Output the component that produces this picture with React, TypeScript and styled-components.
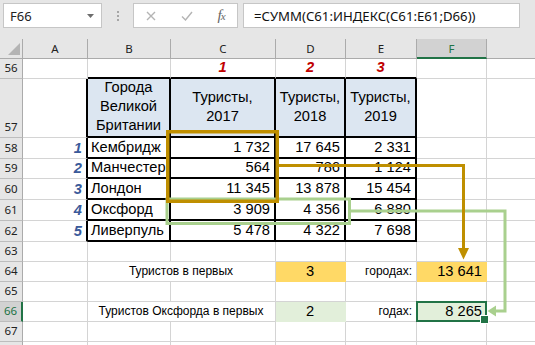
import React from 'react';
import styled, { createGlobalStyle } from 'styled-components';

const GlobalStyle = createGlobalStyle`
  html, body {
    margin: 0;
    padding: 0;
  }
  body {
    background: #ffffff;
    overflow: hidden;
  }
  * {
    box-sizing: border-box;
  }
`;

const GRID = '#d4d4d4';
const HEAD_LINE = '#ababab';
const HEAD_BG = '#e6e6e6';
const HEAD_ACTIVE = '#d2d2d2';
const EXCEL_GREEN = '#217346';
const YELLOW = '#ffd966';
const MINT = '#e2efda';
const TABLE_HEAD = '#dce6f1';

const Window = styled.div`
  position: relative;
  width: 535px;
  height: 345px;
  overflow: hidden;
  background: #fff;
`;

/* ---------- formula bar ---------- */

const TopBar = styled.div`
  display: flex;
  align-items: flex-start;
  height: 39px;
  padding: 3px 0 0 3px;
  background: ${HEAD_BG};
  font-family: 'Noto Sans', sans-serif;
`;

const NameBox = styled.div`
  display: flex;
  align-items: center;
  justify-content: space-between;
  width: 99px;
  height: 25px;
  padding: 0 7px 0 6px;
  background: #fff;
  border: 1px solid #c6c6c6;
  font-size: 13px;
  color: #222;
`;

const Grip = styled.div`
  display: flex;
  flex-direction: column;
  align-items: center;
  justify-content: center;
  gap: 2px;
  width: 31px;
  height: 25px;

  span {
    width: 2px;
    height: 2px;
    background: #a6a6a6;
  }
`;

const ButtonGroup = styled.div`
  display: flex;
  align-items: center;
  justify-content: space-around;
  width: 105px;
  height: 25px;
  background: #fff;
  border: 1px solid #c6c6c6;
`;

const Fx = styled.span`
  font-family: 'Liberation Serif', serif;
  font-style: italic;
  font-size: 15px;
  color: #666;
  letter-spacing: -1px;

  small {
    font-size: 11px;
  }
`;

const FormulaBox = styled.div`
  display: flex;
  align-items: center;
  width: 277px;
  height: 25px;
  margin-left: 5px;
  padding-left: 10px;
  background: #fff;
  border: 1px solid #c6c6c6;
  font-size: 13.2px;
  color: #111;
  white-space: nowrap;
`;

/* ---------- sheet ---------- */

const Sheet = styled.div`
  display: grid;
  grid-template-columns: 23px 65px 83px 105px 70px 71px 70px 200px;
  grid-template-rows: 20px 20px 59px 21px 20px 21px 21px 21px 20px 20px 20px 20px 20px 20px;
  font-family: 'Liberation Sans', Arial, sans-serif;
  font-size: 14.67px;
  color: #000;
`;

const Corner = styled.div`
  position: relative;
  background: ${HEAD_BG};
  border-right: 1px solid ${HEAD_LINE};
  border-bottom: 1px solid ${HEAD_LINE};

  &::after {
    content: '';
    position: absolute;
    right: 2px;
    bottom: 3px;
    border-style: solid;
    border-width: 0 0 12px 12px;
    border-color: transparent transparent #b4b4b4 transparent;
  }
`;

const ColHead = styled.div<{ $active?: boolean }>`
  display: flex;
  align-items: center;
  justify-content: center;
  background: ${(p) => (p.$active ? HEAD_ACTIVE : HEAD_BG)};
  border-right: 1px solid ${HEAD_LINE};
  border-bottom: ${(p) => (p.$active ? `2px solid ${EXCEL_GREEN}` : `1px solid ${HEAD_LINE}`)};
  font-family: 'Noto Sans', sans-serif;
  font-size: 11.5px;
  color: ${(p) => (p.$active ? EXCEL_GREEN : '#222')};
`;

const RowHead = styled.div<{ $active?: boolean }>`
  display: flex;
  align-items: flex-end;
  justify-content: center;
  padding-bottom: 1px;
  line-height: 18px;
  background: ${(p) => (p.$active ? HEAD_ACTIVE : HEAD_BG)};
  border-right: ${(p) => (p.$active ? `2px solid ${EXCEL_GREEN}` : `1px solid ${HEAD_LINE}`)};
  border-bottom: 1px solid #bdbdbd;
  font-family: 'Noto Sans', sans-serif;
  font-size: 11.5px;
  color: ${(p) => (p.$active ? EXCEL_GREEN : '#222')};
`;

type Align = 'left' | 'center' | 'right';

const justify = { left: 'flex-start', center: 'center', right: 'flex-end' };

const Cell = styled.div<{
  $align?: Align;
  $fill?: string;
  $rb?: boolean;
  $bb?: boolean;
  $span?: number;
  $selected?: boolean;
}>`
  display: flex;
  align-items: flex-end;
  justify-content: ${(p) => justify[p.$align || 'left']};
  grid-column: span ${(p) => p.$span || 1};
  padding: 0 4px 1px 3px;
  line-height: 18px;
  white-space: nowrap;
  background: ${(p) => p.$fill || '#fff'};
  border-right: ${(p) => (p.$rb ? '2px solid #000' : `1px solid ${p.$fill || GRID}`)};
  border-bottom: ${(p) => (p.$bb ? '2px solid #000' : `1px solid ${p.$fill || GRID}`)};
  position: ${(p) => (p.$selected ? 'relative' : 'static')};

  ${(p) =>
    p.$selected &&
    `
    &::after {
      content: '';
      position: absolute;
      top: -1px;
      left: -1px;
      right: -1px;
      bottom: -1px;
      border: 2px solid ${EXCEL_GREEN};
    }
    &::before {
      content: '';
      position: absolute;
      right: -3px;
      bottom: -3px;
      width: 7px;
      height: 7px;
      background: ${EXCEL_GREEN};
      border: 1px solid #fff;
      z-index: 1;
    }
  `}
`;

const HeadCell = styled(Cell)`
  align-items: center;
  justify-content: center;
  text-align: center;
  white-space: normal;
  line-height: 19px;
  padding: 0 2px 2px;
  background: ${TABLE_HEAD};
`;

const Marker = styled.span<{ $color: string }>`
  font-weight: bold;
  font-style: italic;
  color: ${(p) => p.$color};
`;

const Note = styled.span`
  font-size: 12px;
  line-height: 17px;
`;

const Overlay = styled.svg`
  position: absolute;
  top: 0;
  left: 0;
  pointer-events: none;
`;

// G is wider than the window, its letter sits off-screen
const columns = ['A', 'B', 'C', 'D', 'E', 'F', ''];

const cities = [
  ['Кембридж', '1 732', '17 645', '2 331'],
  ['Манчестер', '564', '786', '1 124'],
  ['Лондон', '11 345', '13 878', '15 454'],
  ['Оксфорд', '3 909', '4 356', '6 880'],
  ['Ливерпуль', '5 478', '4 322', '7 698'],
];

const EmptyRow = ({ n }: { n?: number }) => (
  <>
    <RowHead>{n}</RowHead>
    {columns.map((c, i) => (
      <Cell key={i} />
    ))}
  </>
);

const App = () => {
  return (
    <Window>
      <GlobalStyle />
      <TopBar>
        <NameBox>
          F66
          <svg width="7" height="4" viewBox="0 0 7 4">
            <path d="M0 0 H7 L3.5 4 Z" fill="#6d6d6d" />
          </svg>
        </NameBox>
        <Grip>
          <span />
          <span />
          <span />
        </Grip>
        <ButtonGroup>
          <svg width="10" height="10" viewBox="0 0 10 10">
            <path d="M1 1 L9 9 M9 1 L1 9" stroke="#b4b4b4" strokeWidth="1.4" />
          </svg>
          <svg width="12" height="10" viewBox="0 0 12 10">
            <path d="M1 5.5 L4.5 9 L11 1" stroke="#b4b4b4" strokeWidth="1.4" fill="none" />
          </svg>
          <Fx>
            f<small>x</small>
          </Fx>
        </ButtonGroup>
        <FormulaBox>=СУММ(C61:ИНДЕКС(C61:E61;D66))</FormulaBox>
      </TopBar>

      <Sheet>
        <Corner />
        {columns.map((c, i) => (
          <ColHead key={i} $active={c === 'F'}>
            {c}
          </ColHead>
        ))}

        <RowHead>56</RowHead>
        <Cell />
        <Cell $bb />
        <Cell $bb $align="center">
          <Marker $color="#c00000">1</Marker>
        </Cell>
        <Cell $bb $align="center">
          <Marker $color="#c00000">2</Marker>
        </Cell>
        <Cell $bb $align="center">
          <Marker $color="#c00000">3</Marker>
        </Cell>
        <Cell />
        <Cell />

        <RowHead>57</RowHead>
        <Cell $rb />
        <HeadCell $rb $bb>Города Великой Британии</HeadCell>
        <HeadCell $rb $bb>
          Туристы,
          <br />
          2017
        </HeadCell>
        <HeadCell $rb $bb>
          Туристы,
          <br />
          2018
        </HeadCell>
        <HeadCell $rb $bb>
          Туристы,
          <br />
          2019
        </HeadCell>
        <Cell />
        <Cell />

        {cities.map(([city, a, b, c], i) => (
          <React.Fragment key={city}>
            <RowHead>{58 + i}</RowHead>
            <Cell $rb $align="right">
              <Marker $color="#3a5a9a">{i + 1}</Marker>
            </Cell>
            <Cell $rb $bb>
              {city}
            </Cell>
            <Cell $rb $bb $align="right">
              {a}
            </Cell>
            <Cell $rb $bb $align="right">
              {b}
            </Cell>
            <Cell $rb $bb $align="right">
              {c}
            </Cell>
            <Cell />
            <Cell />
          </React.Fragment>
        ))}

        <EmptyRow n={63} />

        <RowHead>64</RowHead>
        <Cell />
        <Cell $span={2} $align="center">
          <Note>Туристов в первых</Note>
        </Cell>
        <Cell $fill={YELLOW} $align="center">
          3
        </Cell>
        <Cell $align="right">
          <Note>городах:</Note>
        </Cell>
        <Cell $fill={YELLOW} $align="right">
          13 641
        </Cell>
        <Cell />

        <EmptyRow n={65} />

        <RowHead $active>66</RowHead>
        <Cell />
        <Cell $span={2} $align="center">
          <Note>Туристов Оксфорда в первых</Note>
        </Cell>
        <Cell $fill={MINT} $align="center">
          2
        </Cell>
        <Cell $align="right">
          <Note>годах:</Note>
        </Cell>
        <Cell $fill={MINT} $align="right" $selected>
          8 265
        </Cell>
        <Cell />

        <EmptyRow n={67} />
        <EmptyRow />
      </Sheet>

      <Overlay width="535" height="345" viewBox="0 0 535 345">
        <g stroke="#a9d08e" fill="none" strokeWidth="3">
          <rect x="167" y="199" width="182.5" height="24.5" />
          <path d="M351 211 H505 V311 H495" />
        </g>
        <polygon points="496,305.5 496,316.5 487.5,311" fill="#a9d08e" />
        <g stroke="#bf8f00" fill="none">
          <rect x="167.75" y="131.75" width="109.5" height="69.5" strokeWidth="3.5" />
          <path d="M279 165.5 H463.5 V249" strokeWidth="3" />
        </g>
        <polygon points="458,248 469,248 463.5,259.5" fill="#bf8f00" />
      </Overlay>
    </Window>
  );
};

export default App;
